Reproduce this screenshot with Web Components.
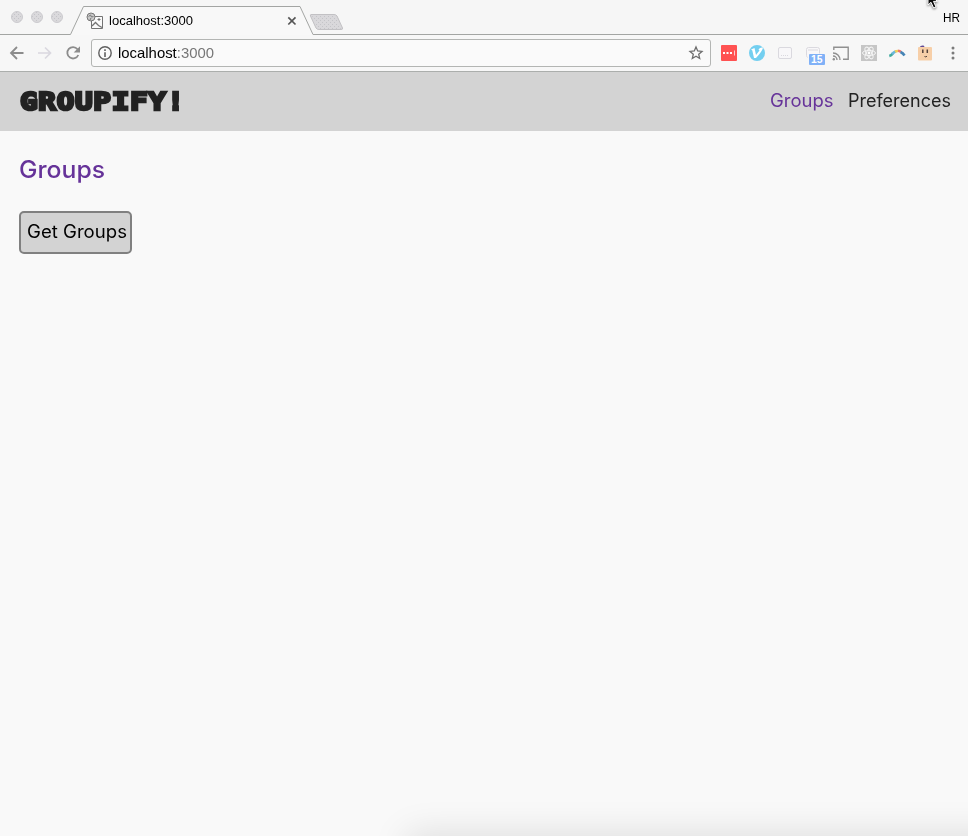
<!DOCTYPE html>
<html lang="en"><head><meta charset="utf-8"><title>Groupify</title>
<style>html,body{margin:0;height:100%;overflow:hidden;background:#f9f9f9}</style></head>
<body><groupify-window></groupify-window>
<script>
function define(name, html, after){
  customElements.define(name, class extends HTMLElement{
    connectedCallback(){
      if(this.shadowRoot) return;
      const t=document.createElement('template');t.innerHTML=html;
      this.attachShadow({mode:'open'}).append(t.content.cloneNode(true));
      if(after) after(this);
    }
  });
}
// A line of text scaled horizontally to the width given in its attribute.
define('fit-text','<style>:host{display:block;white-space:nowrap;flex:none}span{display:inline-block;transform-origin:0 50%}</style><span><slot></slot></span>',el=>{
  const w=+el.getAttribute('width'),s=el.shadowRoot.querySelector('span');
  el.style.width=w+'px';
  s.style.transform='scaleX('+w/s.getBoundingClientRect().width+')';
});
define('tab-strip',`<style>
:host{display:block;position:relative;height:35px;font:13px/16px "Liberation Sans",Arial,sans-serif;color:#000}
.bg{display:block}
.row{position:absolute;inset:0;display:flex;align-items:center;padding:7px 8px 0 109px;box-sizing:border-box}
.user{margin-left:auto;margin-top:-7px}
</style>
<svg class="bg" width="968" height="35">
<defs><pattern id="d" width="4" height="4" patternUnits="userSpaceOnUse"><path d="M0 .5h1M2 2.5h1" stroke="#c4c4c8"/></pattern></defs>
<rect width="968" height="35" fill="#f6f6f6"/>
<path d="M71 35L83.5 6.500H300L312.500 35Z" fill="#f8f8f8"/>
<path d="M0 34.500H70.500L83.500 6.500H300L313 34.500H968" fill="none" stroke="#a3a5a3"/>
<g fill="#dad9dc" stroke="#cccbcf"><circle cx="17" cy="17" r="5.500"/><circle cx="37" cy="17" r="5.500"/><circle cx="57" cy="17" r="5.500"/></g>
<g fill="url(#d)"><circle cx="17" cy="17" r="5"/><circle cx="37" cy="17" r="5"/><circle cx="57" cy="17" r="5"/></g>
<path d="M311 14.500H334Q336 14.500 337 16L342.500 28Q343 29.500 341 29.500H319Q317 29.500 316 28L310.500 16Q310 14.500 311 14.500Z" fill="#d9d8db" stroke="#c2c1c4"/>
<path d="M312 16H335L341 29H318Z" fill="url(#d)"/>
<path d="M91.500 20V28.500H102.500V16.500H95" fill="#fafafa" stroke="#737373"/>
<path d="M92 26l3.500-3.500 3 3 3.500 2" fill="none" stroke="#737373" stroke-width="1.300"/><path d="M97.500 19.500h3M99 18v3" stroke="#737373"/>
<circle cx="91" cy="17" r="4" fill="#c9c9c9" stroke="#777"/><path d="M88.500 16.500l2-1.500 1 2 2-.5M90 20l1-2" stroke="#777" fill="none"/>
<path d="M288.300 17.300l7.200 7.200M295.500 17.300l-7.200 7.200" stroke="#555" stroke-width="1.700"/>
<g transform="translate(927 -7)"><path d="M1 0V12L4 9.300 6.600 15 9 14 6.500 8.400H10.500Z" fill="#0c0c0c" stroke="#fff" stroke-width="1" style="filter:drop-shadow(0 1px 1px #777)"/></g>
</svg><div class="row"><fit-text width="84">localhost:3000</fit-text><fit-text class="user" width="17">HR</fit-text></div>`);
define('browser-toolbar',`<style>
:host{display:flex;height:36px;background:#f7f7f7;box-sizing:content-box;border-bottom:1px solid #adb0ae;align-items:center;margin-bottom:-1px}
svg{display:block;flex:none}
.url{display:flex;align-items:center;box-sizing:border-box;width:620px;height:28px;border:1px solid #b3b5b3;border-radius:3px;background:#fafafa;font:15px/18px "Liberation Sans",Arial,sans-serif;color:#000;padding-left:6px}
i{font-style:normal;color:#777}.star{margin-left:auto;margin-right:6px}
</style>
<svg width="91" height="36" fill="none" stroke="#8c8c8c" stroke-width="1.800"><path d="M23.500 18H11.500M17 12L11 18L17 24"/><path d="M38 18H50.500M45 12.500L50.500 18L45 23.500" stroke="#dad8df" stroke-width="1.700"/><path d="M77.500 14.200A5.700 5.700 0 1 0 78.300 20"/><path d="M80 11.200v6.300h-6.300Z" fill="#8c8c8c" stroke="none"/></svg>
<div class="url"><svg width="14" height="14" fill="none" stroke="#606060"><circle cx="7" cy="7" r="6.200" stroke-width="1.400"/><path d="M7 3.200v1.700M7 6.200v4.700" stroke-width="1.600"/></svg><fit-text width="96" style="margin-left:6px">localhost<i>:3000</i></fit-text>
<svg class="star" width="16" height="16"><path d="M8 2l1.700 4 4.300.4-3.300 2.900 1 4.200L8 11.300l-3.700 2.200 1-4.200L2 6.400 6.300 6Z" fill="none" stroke="#6c6c6c" stroke-width="1.300"/></svg></div>
<svg width="257" height="36" viewBox="711 35 257 36">
<rect x="721" y="45" width="16" height="16" rx="1" fill="#ff5252"/><g fill="#fff"><path d="M723 52h2v2h-2zM726.500 52h2v2h-2zM730 52h2v2h-2z"/><path d="M734 50.500h1v5h-1z" opacity=".7"/></g>
<circle cx="757" cy="53" r="8" fill="#73cff0"/><path d="M751 49.500l3.500-1.500 1.500 7 3.500-4.500-1-1q1.500-2.500 4.500-2-.5 3.500-7 10.500h-2l-1.700-7.500z" fill="#fff"/>
<g fill="#f8f7f9" stroke="#dad9df"><rect x="778.500" y="47.500" width="13" height="11" rx="1.500"/><path d="M781 55.500h8" stroke-dasharray="1 1"/><path d="M807.500 57.500q-1-1-1-2v-6q0-2 2-2h9q2 0 2 2v4M808 50h10"/></g>
<rect x="809" y="54" width="16" height="11" rx="1" fill="#80b1f7"/><text x="811" y="63.200" textLength="11.500" lengthAdjust="spacingAndGlyphs" font-family="Liberation Sans" font-size="10" font-weight="700" fill="#fff">15</text>
<g fill="none" stroke="#909090" stroke-width="1.400"><path d="M833.800 50v-2.800H848.200V59.300H843M833 53a7 7 0 0 1 7 7M833 56a4 4 0 0 1 4 4"/></g><circle cx="833.800" cy="59.200" r="1.200" fill="#909090"/>
<rect x="861" y="45" width="16" height="16" fill="#c6c6c6"/><g fill="none" stroke="#f5f5f5"><ellipse cx="869" cy="53" rx="6.500" ry="2.600"/><ellipse cx="869" cy="53" rx="6.500" ry="2.600" transform="rotate(60 869 53)"/><ellipse cx="869" cy="53" rx="6.500" ry="2.600" transform="rotate(120 869 53)"/></g><circle cx="869" cy="53" r="1.400" fill="#fff"/>
<g fill="none" stroke-width="2.600"><path d="M889.300 56q2-.5 3.500-2.500" stroke="#42aba0"/><path d="M892 54q2-2 4-2.700" stroke="#6bb6db"/><path d="M895 51.700q1.500-.8 3-.7" stroke="#f2ce58"/><path d="M898 50.800q2 .2 3 1.400" stroke="#ed7771"/><path d="M900.500 52q2.500 1 4 3.500" stroke="#4684b5"/></g>
<path d="M919.500 47.500q1-2.500 4-2l1.500 2z" fill="#604894"/><rect x="918" y="47" width="14" height="13.500" rx="1" fill="#f7cfa8"/><path d="M922.800 49.500v3.500M927.300 49.500v3.500" stroke="#54433c" stroke-width="1.500"/><path d="M924.500 56.500q1.500 1 2.500-.3" stroke="#54433c" fill="none"/>
<g fill="#7b7b7b"><circle cx="953" cy="48" r="1.500"/><circle cx="953" cy="53" r="1.500"/><circle cx="953" cy="58" r="1.500"/></g>
</svg>`);
define('site-header',`<style>
:host{display:flex;align-items:center;box-sizing:border-box;height:60px;background:#d3d3d3;border-top:1px solid #abaeac;padding:0 17px 2px 20px;font:18px/24px Inter,sans-serif;color:#222}
.logo{font:bold 25.500px/30px "DejaVu Sans Mono",monospace;-webkit-text-stroke:2.600px #222;letter-spacing:.6px}
nav{display:flex;gap:15px;margin-left:auto}.on{color:#663399}
</style><fit-text class="logo" width="165">GROUPIFY!</fit-text><nav><fit-text class="on" width="63.500">Groups</fit-text><fit-text width="103">Preferences</fit-text></nav>`);
define('groups-page',`<style>
:host{display:block;flex:1;position:relative;padding:24px 19px;background:#f9f9f9;font-family:Inter,sans-serif;overflow:hidden}
h1{margin:0 0 27px;font:500 24px/29px Inter,sans-serif;color:#663399}
button{display:flex;align-items:center;box-sizing:border-box;width:113px;height:43px;margin:0;padding:0 5px 2px 4px;border:2px solid #808080;border-radius:5px;background:#d3d3d3;color:#000;font:18px/24px Inter,sans-serif}
.shade{position:absolute;left:412px;right:-60px;bottom:-24px;height:20px;box-shadow:0 0 36px 5px rgba(0,0,0,.13)}
</style><h1><fit-text width="86">Groups</fit-text></h1><button><fit-text width="100">Get Groups</fit-text></button><div class="shade"></div>`);
define('groupify-window','<style>:host{display:flex;flex-direction:column;width:968px;height:836px}</style><tab-strip></tab-strip><browser-toolbar></browser-toolbar><site-header></site-header><groups-page></groups-page>');
</script></body></html>
